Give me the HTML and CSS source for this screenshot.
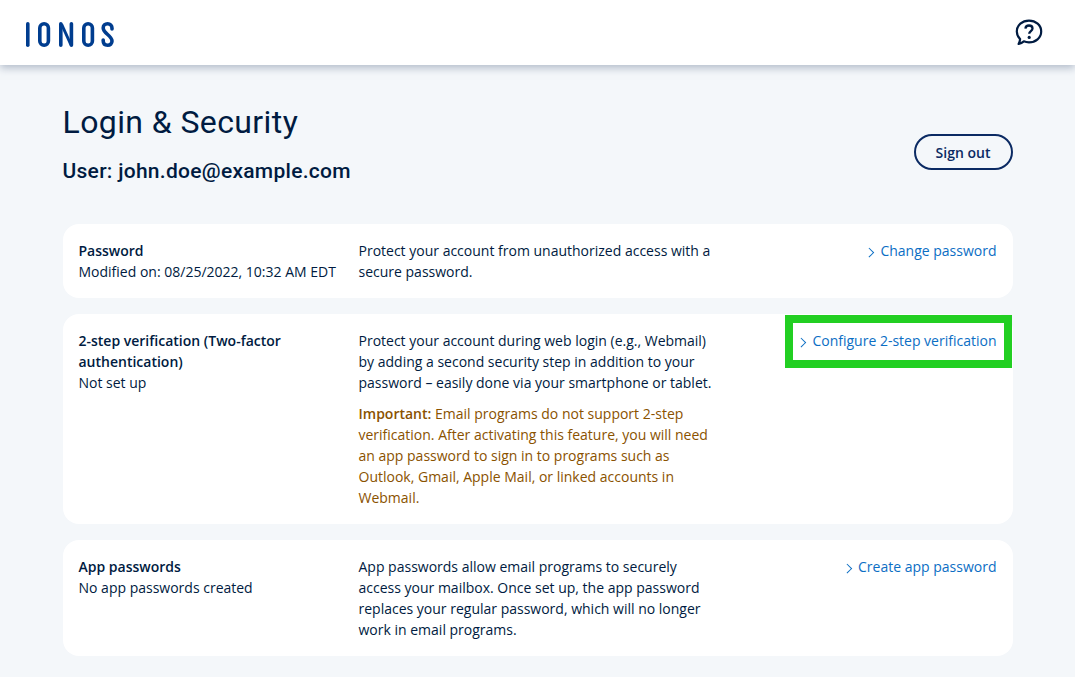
FILE: index.html
```html
<!DOCTYPE html>
<html lang="en">
<head>
<meta charset="utf-8">
<title>Login &amp; Security</title>
<link rel="stylesheet" href="styles.css">
</head>
<body>
<header class="topbar">
  <svg class="logo" width="88" height="25" viewBox="0 0 88 25" role="img" aria-label="IONOS">
    <g fill="none" stroke="#003d8f" stroke-width="3.6" stroke-linecap="round">
      <path d="M1.8 1.8V23.2"/>
      <rect x="13.8" y="1.8" width="8.6" height="21.4" rx="4.3"/>
      <path d="M34.8 23.2V1.8M45.4 1.8V23.2"/>
      <path d="M35.5 2L45 23" stroke-width="3" stroke-linecap="butt"/>
      <rect x="57.8" y="1.8" width="8.6" height="21.4" rx="4.3"/>
      <path d="M86 7V6.2C86 3.4 84.2 1.8 81.6 1.8C79 1.8 77.2 3.4 77.2 6C77.2 8.4 78.2 9.6 81.6 12.5C85 15.4 86 16.6 86 19C86 21.6 84.2 23.2 81.6 23.2C79 23.2 77.2 21.6 77.2 18.8V18"/>
    </g>
  </svg>
  <svg class="help" width="28" height="28" viewBox="0 0 28 28" role="img" aria-label="Help">
    <path d="M3.6 26C5.4 25.5 7.3 24.6 8.8 23.3C10.4 24 12.2 24.3 14 24.3C20.6 24.3 26.2 20 26.2 13.5C26.2 7.2 20.8 2.6 14 2.6C7.2 2.6 1.8 7.2 1.8 13.5C1.8 16.6 3.1 19.2 5.1 21.1C5 22.8 4.4 24.6 3.6 26Z" fill="none" stroke="#001b41" stroke-width="2.2" stroke-linejoin="round"/>
    <path d="M10.4 10.6C10.6 8.6 12 7.5 14 7.5C16.1 7.5 17.5 8.7 17.5 10.5C17.5 13 14.2 13.2 14.2 15.8" fill="none" stroke="#001b41" stroke-width="2.3"/>
    <circle cx="14.2" cy="19.4" r="1.6" fill="#001b41"/>
  </svg>
</header>
<main class="page">
  <section class="intro">
    <div>
      <h1 class="title">Login &amp; Security</h1>
      <p class="user">User: john.doe@example.com</p>
    </div>
    <button class="signout" type="button">Sign out</button>
  </section>

  <section class="card">
    <div class="col-label">
      <strong>Password</strong><br>
      Modified on: 08/25/2022, 10:32 AM EDT
    </div>
    <div class="col-desc">
      <p>Protect your account from unauthorized access with a secure password.</p>
    </div>
    <a class="action" href="#">Change password</a>
  </section>

  <section class="card">
    <div class="col-label">
      <strong>2-step verification (Two-factor authentication)</strong><br>
      Not set up
    </div>
    <div class="col-desc">
      <p>Protect your account during web login (e.g., Webmail) by adding a second security step in addition to your password – easily done via your smartphone or tablet.</p>
      <p class="warn"><strong>Important:</strong> Email programs do not support 2-step verification. After activating this feature, you will need an app password to sign in to programs such as Outlook, Gmail, Apple Mail, or linked accounts in Webmail.</p>
    </div>
    <a class="action" href="#">Configure 2-step verification</a>
    <div class="highlight"></div>
  </section>

  <section class="card">
    <div class="col-label">
      <strong>App passwords</strong><br>
      No app passwords created
    </div>
    <div class="col-desc">
      <p>App passwords allow email programs to securely access your mailbox. Once set up, the app password replaces your regular password, which will no longer work in email programs.</p>
    </div>
    <a class="action" href="#">Create app password</a>
  </section>
</main>
</body>
</html>
```

FILE: styles.css
```css
* { box-sizing: border-box; }

html, body { margin: 0; height: 100%; overflow: hidden; }

body {
  background: #f4f7fa;
  color: #001b41;
  font-family: "Open Sans", sans-serif;
  font-size: 14px;
  line-height: 21px;
}

.topbar {
  height: 65px;
  background: #fff;
  box-shadow: 0 3px 8px rgba(113, 130, 155, 0.5);
  display: flex;
  align-items: center;
  justify-content: space-between;
  padding: 0 32px 0 26px;
}

.logo { display: block; margin-top: 4px; }
.help { display: block; margin-top: -2px; }

.page {
  width: 950px;
  margin: 0 auto;
  display: flex;
  flex-direction: column;
  gap: 16px;
}

.intro {
  display: flex;
  justify-content: space-between;
  align-items: flex-start;
  height: 143px;
  padding-top: 36px;
}

.title {
  margin: 0;
  font-family: Roboto, sans-serif;
  font-size: 32px;
  line-height: 42px;
  font-weight: 400;
  letter-spacing: 0.4px;
}

.user {
  margin: 14px 0 0;
  font-family: Roboto, sans-serif;
  font-size: 21px;
  line-height: 28px;
  font-weight: 500;
  letter-spacing: 0.28px;
}

.signout {
  margin-top: 33px;
  width: 99px;
  height: 36px;
  border: 2px solid #0b2a63;
  border-radius: 18px;
  background: transparent;
  color: #0b2a63;
  font: 600 14px/20px "Open Sans", sans-serif;
  padding: 2px 0 0;
}

.card {
  position: relative;
  display: flex;
  align-items: flex-start;
  background: #fff;
  border-radius: 16px;
  padding: 16px;
}

.col-label { width: 280px; flex: none; padding-right: 16px; }
.col-label strong, .warn strong { font-weight: 600; }

.col-desc { width: 360px; flex: none; }
.col-desc p { margin: 0; }
.col-desc .warn { margin-top: 10px; color: #8a5200; }

.action {
  margin-left: auto;
  color: #0b6ec4;
  text-decoration: none;
  white-space: nowrap;
}

.action::before {
  content: "";
  display: inline-block;
  width: 5.5px;
  height: 5.5px;
  border-top: 1.7px solid #0b6ec4;
  border-right: 1.7px solid #0b6ec4;
  transform: rotate(45deg);
  margin: 0 8px 1px 0;
}

.highlight {
  position: absolute;
  top: 1px;
  right: 1px;
  width: 227px;
  height: 53px;
  border: 8px solid #22cf22;
  pointer-events: none;
}
```
